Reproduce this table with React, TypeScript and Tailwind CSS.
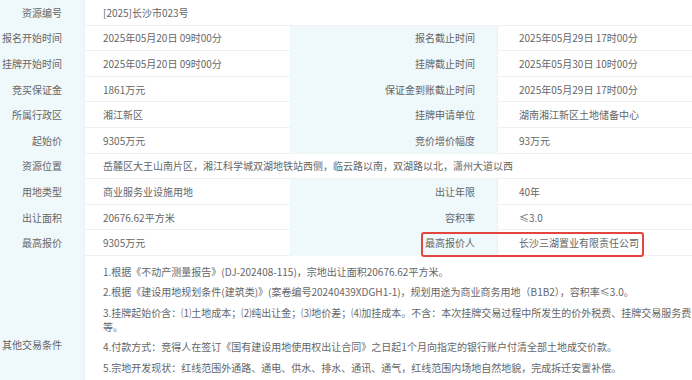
import React from 'react';

type Row = {
    label: string;
    value: string;
    label2?: string;
    value2?: string;
};

const rows: Row[] = [
    { label: '资源编号', value: '[2025]长沙市023号' },
    { label: '报名开始时间', value: '2025年05月20日 09时00分', label2: '报名截止时间', value2: '2025年05月29日 17时00分' },
    { label: '挂牌开始时间', value: '2025年05月20日 09时00分', label2: '挂牌截止时间', value2: '2025年05月30日 10时00分' },
    { label: '竞买保证金', value: '1861万元', label2: '保证金到账截止时间', value2: '2025年05月29日 17时00分' },
    { label: '所属行政区', value: '湘江新区', label2: '挂牌申请单位', value2: '湖南湘江新区土地储备中心' },
    { label: '起始价', value: '9305万元', label2: '竞价增价幅度', value2: '93万元' },
    { label: '资源位置', value: '岳麓区大王山南片区，湘江科学城双湖地铁站西侧，临云路以南，双湖路以北，潇州大道以西' },
    { label: '用地类型', value: '商业服务业设施用地', label2: '出让年限', value2: '40年' },
    { label: '出让面积', value: '20676.62平方米', label2: '容积率', value2: '≤3.0' },
    { label: '最高报价', value: '9305万元', label2: '最高报价人', value2: '长沙三湖置业有限责任公司' },
];

const conditions = [
    '1.根据《不动产测量报告》(DJ-202408-115)，宗地出让面积20676.62平方米。',
    '2.根据《建设用地规划条件(建筑类)》(案卷编号20240439XDGH1-1)，规划用途为商业商务用地（B1B2），容积率≤3.0。',
    '3.挂牌起始价含：⑴土地成本；⑵纯出让金；⑶地价差；⑷加挂成本。不含：本次挂牌交易过程中所发生的价外税费、挂牌交易服务费等。',
    '4.付款方式：竞得人在签订《国有建设用地使用权出让合同》之日起1个月向指定的银行账户付清全部土地成交价款。',
    '5.宗地开发现状：红线范围外通路、通电、供水、排水、通讯、通气，红线范围内场地自然地貌，完成拆迁安置补偿。',
];

const labelCls = 'flex items-center justify-end pr-[22px] bg-[#eff8fb] border-r border-[#e9f0f4] whitespace-nowrap';
const valueCls = 'flex items-center pl-[18px] bg-white whitespace-nowrap';

export default function App() {
    return (
        <div
            className="relative w-[692px] h-[380px] overflow-hidden bg-white text-[10px] text-[#666]"
            style={{ fontFamily: '"Noto Sans CJK SC", "Noto Sans", sans-serif' }}
        >
            {/* Main table */}
            <div className="grid grid-cols-[85px_205px_208px_1fr]">
                {rows.map((r) => (
                    <React.Fragment key={r.label}>
                        <div className={`${labelCls} h-[25.6px] border-b border-b-[#f4f7f9]`}>{r.label}</div>
                        {r.label2 ? (
                            <>
                                <div className={`${valueCls} h-[25.6px] border-b border-[#eef1f3]`}>{r.value}</div>
                                <div className={`${labelCls} h-[25.6px] pr-[19px] border-b border-b-[#f4f7f9]`}>{r.label2}</div>
                                <div className={`${valueCls} h-[25.6px] pl-[21px] border-b border-[#eef1f3]`}>{r.value2}</div>
                            </>
                        ) : (
                            <div className={`${valueCls} col-span-3 h-[25.6px] border-b border-[#eef1f3]`}>{r.value}</div>
                        )}
                    </React.Fragment>
                ))}

                {/* Other conditions */}
                <div className={`${labelCls} min-h-[178px]`}>其他交易条件</div>
                <div className="col-span-3 bg-white pl-[18px] pr-0 pt-[9px] pb-2 leading-[14px] space-y-[6.5px]">
                    {conditions.map((c) => (
                        <p key={c}>{c}</p>
                    ))}
                </div>
            </div>

            {/* Highlight box */}
            <div className="absolute left-[421px] top-[232px] w-[223px] h-[25px] border-2 border-[#e2463f] rounded-[3px]" />
        </div>
    );
}
